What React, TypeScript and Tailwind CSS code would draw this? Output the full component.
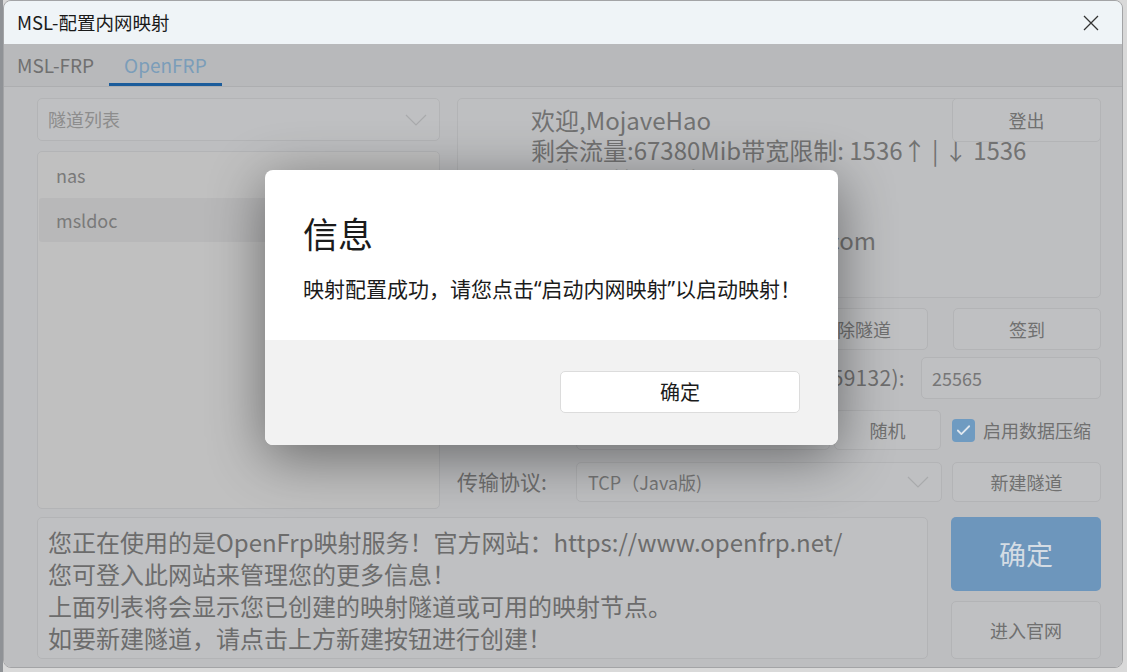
import { Check } from 'lucide-react';

const font = { fontFamily: '"Noto Sans CJK SC", "Noto Sans", sans-serif' };
const latin = { fontFamily: '"Noto Sans", sans-serif' };

const infoLines = [
  '欢迎,MojaveHao',
  '剩余流量:67380Mib带宽限制: 1536↑ | ↓ 1536',
  '用户组:普通用户',
  '实名状态:已实名',
  '邮箱:mojavehao@outlook.com',
];

const helpLines = [
  '您正在使用的是OpenFrp映射服务！官方网站：https://www.openfrp.net/',
  '您可登入此网站来管理您的更多信息！',
  '上面列表将会显示您已创建的映射隧道或可用的映射节点。',
  '如要新建隧道，请点击上方新建按钮进行创建！',
];

function Chevron() {
  return (
    <svg width="22" height="12" viewBox="0 0 22 12" className="shrink-0">
      <polyline points="1,1 11,11 21,1" fill="none" stroke="#a9aaac" strokeWidth="1.2" />
    </svg>
  );
}

function Btn({ label, className = '' }: { label: string; className?: string }) {
  return (
    <div className={`flex shrink-0 items-center justify-center rounded-[5px] border border-[#b3b4b6] bg-[#bfc0c2] text-[18px] text-[#707070] ${className}`}>
      {label}
    </div>
  );
}

export default function App() {
  return (
    <div className="relative h-[672px] w-[1127px] overflow-hidden bg-[#d9d9d9]" style={font}>
      <div className="absolute left-0 top-0 h-full w-[3px] bg-[#8f9296]" />
      <div className="ml-[3px] flex h-[668px] w-[1120px] flex-col overflow-hidden rounded-lg border border-[#a3a4a6]">
        {/* title bar */}
        <div className="flex h-[43px] shrink-0 items-center justify-between bg-[#eff4f7] pl-[13px] pr-[23px]">
          <span className="text-[18.5px] text-[#1a1a1a]">MSL-配置内网映射</span>
          <svg width="16" height="16" viewBox="0 0 16 16">
            <path d="M1 1 L15 15 M15 1 L1 15" stroke="#333" strokeWidth="1.3" />
          </svg>
        </div>

        {/* tabs */}
        <div className="flex h-[42px] shrink-0 items-stretch bg-[#b8b9bb]">
          <div className="flex items-center pl-[13px] pr-[15px] text-[19px] text-[#707070]">MSL-FRP</div>
          <div className="flex items-center border-b-[3px] border-[#1b5c9b] px-[15px] pt-[3px] text-[19px] text-[#7b9db9]">OpenFRP</div>
        </div>

        {/* content */}
        <div className="flex flex-1 flex-col border-t border-[#adaeb0] bg-[#bdbec0] pl-[33px] pr-[20px] pt-[11px]">
          <div className="flex h-[411px] gap-[17px]">
            {/* left column */}
            <div className="flex w-[403px] flex-col gap-[10px]">
              <div className="flex h-[43px] items-center justify-between rounded-[5px] border border-[#b3b4b6] bg-[#bfc0c2] pl-[10px] pr-[12px]">
                <span className="text-[18px] text-[#8d8d8d]">隧道列表</span>
                <Chevron />
              </div>
              <div className="flex flex-1 flex-col rounded-[5px] border border-[#b3b4b6] bg-[#c0c0c0] p-[1px]">
                <div className="flex h-[45px] items-center pl-[17px] text-[18px] text-[#7a7a7a]">nas</div>
                <div className="flex h-[44px] items-center rounded-[3px] bg-[#b8b8b9] pl-[17px] text-[18px] text-[#7a7a7a]">msldoc</div>
              </div>
            </div>

            {/* right column */}
            <div className="flex w-[644px] flex-col">
              <div className="flex h-[200px] rounded-[5px] border border-[#b3b4b6] bg-[#bebfc1]">
                <div className="w-0 flex-1 pl-[73px] pt-[6px] text-[24px] leading-[30px] text-[#727272]">
                  {infoLines.map((line) => (
                    <div key={line} className="whitespace-nowrap">{line}</div>
                  ))}
                </div>
                <Btn label="登出" className="-mr-px -mt-px h-[44px] w-[149px] self-start" />
              </div>

              <div className="mt-[10px] flex h-[42px] gap-[14px]">
                <Btn label="刷新列表" className="flex-1" />
                <Btn label="删除隧道" className="w-[146px]" />
                <Btn label="签到" className="ml-[11px] w-[148px]" />
              </div>

              <div className="mt-[7px] flex h-[42px] items-center justify-end gap-[16px]">
                <span className="whitespace-nowrap text-[21px] tracking-[0.3px] text-[#6f6f6f]">远程端口(10000-59132):</span>
                <div className="flex h-full w-[180px] items-center rounded-[5px] border border-[#b3b4b6] bg-[#bfc0c2] pl-[10px] text-[18px] text-[#777]">25565</div>
              </div>

              <div className="mt-[11px] flex h-[40px] items-center">
                <span className="w-[119px] text-[21px] text-[#6f6f6f]">本地端口:</span>
                <div className="flex h-full w-[254px] items-center rounded-[5px] border border-[#b3b4b6] bg-[#bfc0c2] pl-[10px] text-[18px] text-[#777]">25565</div>
                <Btn label="随机" className="ml-[4px] h-full w-[107px]" />
                <div className="ml-[11px] flex items-center gap-[8px]">
                  <div className="flex h-[23px] w-[23px] items-center justify-center rounded-[4px] bg-[#6f9bc1]">
                    <Check className="h-[17px] w-[17px] text-[#dfe7ef]" strokeWidth={2.5} />
                  </div>
                  <span className="text-[18px] text-[#707070]">启用数据压缩</span>
                </div>
              </div>

              <div className="mt-[12px] flex h-[40px] items-center">
                <span className="w-[119px] text-[21px] text-[#6f6f6f]">传输协议:</span>
                <div className="flex h-full w-[366px] items-center justify-between rounded-[5px] border border-[#b3b4b6] bg-[#bfc0c2] pl-[11px] pr-[12px]">
                  <span className="text-[18px] text-[#777]">TCP（Java版)</span>
                  <Chevron />
                </div>
                <Btn label="新建隧道" className="ml-[10px] h-full w-[149px]" />
              </div>
            </div>
          </div>

          <div className="mt-[8px] flex h-[142px] gap-[23px]">
            <div className="w-[891px] rounded-[5px] border border-[#b3b4b6] bg-[#bfc0c2] pl-[10px] pt-[8px] text-[24px] leading-[32px] text-[#6c6c6c]">
              {helpLines.map((line) => (
                <div key={line} className="whitespace-nowrap">{line}</div>
              ))}
            </div>
            <div className="flex w-[150px] flex-col gap-[10px]">
              <div className="flex h-[74px] items-center justify-center rounded-[5px] bg-[#6d96bc] text-[27px] text-[#d4dce4]">确定</div>
              <Btn label="进入官网" className="flex-1" />
            </div>
          </div>
        </div>
      </div>

      {/* message dialog */}
      <div className="absolute left-[265px] top-[170px] flex h-[275px] w-[573px] flex-col overflow-hidden rounded-lg bg-white shadow-[0_12px_55px_rgba(0,0,0,0.45)]">
        <div className="h-[170px] pl-[38px] pt-[40px]">
          <div className="text-[35px] leading-[46px] text-[#1b1b1b]">信息</div>
          <div className="mt-[18px] whitespace-nowrap text-[21px] leading-[28px] text-[#1b1b1b]">
            映射配置成功，请您点击<span style={latin}>“</span>启动内网映射<span style={latin}>”</span>以启动映射！
          </div>
        </div>
        <div className="flex flex-1 justify-end bg-[#f2f2f2] pr-[38px] pt-[31px]">
          <div className="flex h-[42px] w-[240px] items-center justify-center rounded-[5px] border border-[#dcdcdc] bg-white text-[20px] text-[#1b1b1b]">确定</div>
        </div>
      </div>
    </div>
  );
}
